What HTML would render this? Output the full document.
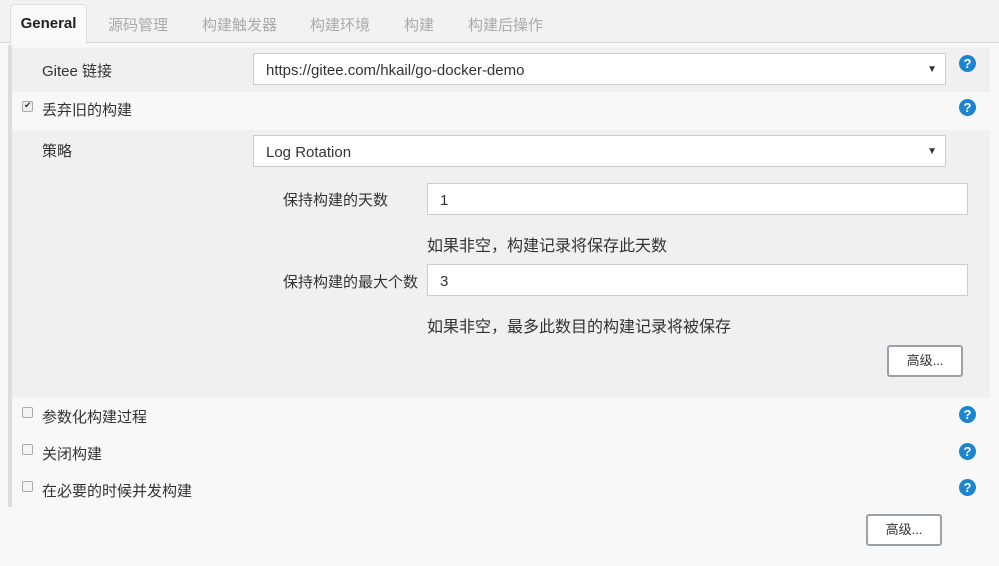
<!DOCTYPE html>
<html><head><meta charset="utf-8"><style>
*{box-sizing:border-box;margin:0;padding:0}
body{width:999px;height:566px;background:#f8f8f8;font-family:"Liberation Sans","Noto Sans CJK SC",sans-serif;font-size:15px;color:#333;position:relative;overflow:hidden}
.a{position:absolute}
.tabs{left:0;top:0;width:999px;height:43px;background:#f2f2f2;border-bottom:1px solid #d8d8d8}
.tab{top:14px;font-size:15px;color:#aaa}
.gen{left:10px;top:4px;width:77px;height:40px;background:#f9f9f9;border:1px solid #ddd;border-bottom:none;border-radius:4px 4px 0 0;font-weight:bold;color:#222;text-align:center;line-height:38px}
.bar{left:8px;top:45px;width:4px;height:462px;background:#ddd}
.inp{background:#fff;border:1px solid #ccc;height:32px;line-height:34px;padding-left:12px;overflow:hidden}
.q{width:17px;height:17px;border-radius:50%;background:#1b85d0;color:#fff;font-weight:bold;font-size:13px;text-align:center;line-height:17px}
.cb{width:11px;height:11px;border:1px solid #aaa;border-radius:2px;background:#f4f4f4}
.btn{background:#fff;border:2px solid #9aa1a8;border-radius:3px;height:32px;width:76px;text-align:center;line-height:28px;font-size:13px}
.arr{right:8px;top:0;font-size:10px;color:#333;line-height:32px}
.d{font-size:16px}
</style></head><body>
<div class="a tabs"></div>
<div class="a gen">General</div>
<div class="a tab" style="left:108px">源码管理</div>
<div class="a tab" style="left:202px">构建触发器</div>
<div class="a tab" style="left:310px">构建环境</div>
<div class="a tab" style="left:404px">构建</div>
<div class="a tab" style="left:468px">构建后操作</div>
<div class="a bar"></div>
<div class="a" style="left:12px;top:48px;width:978px;height:44px;background:#f0f0f0"></div>
<div class="a" style="left:12px;top:130px;width:978px;height:268px;background:#f0f0f0"></div>
<div class="a" style="left:42px;top:60px">Gitee 链接</div>
<div class="a inp" style="left:253px;top:53px;width:693px">https://gitee.com/hkail/go-docker-demo<span class="a arr">▼</span></div>
<div class="a q" style="left:959px;top:55px">?</div>
<div class="a cb" style="left:22px;top:101px;background:#eee"><span style="font-size:9px;position:absolute;left:1px;top:-2px">✔</span></div>
<div class="a" style="left:42px;top:99px">丢弃旧的构建</div>
<div class="a q" style="left:959px;top:99px">?</div>
<div class="a" style="left:42px;top:140px">策略</div>
<div class="a inp" style="left:253px;top:135px;width:693px">Log Rotation<span class="a arr">▼</span></div>
<div class="a" style="left:283px;top:189px">保持构建的天数</div>
<div class="a inp" style="left:427px;top:183px;width:541px">1</div>
<div class="a d" style="left:427px;top:232px">如果非空，构建记录将保存此天数</div>
<div class="a" style="left:283px;top:271px">保持构建的最大个数</div>
<div class="a inp" style="left:427px;top:264px;width:541px">3</div>
<div class="a d" style="left:427px;top:313px">如果非空，最多此数目的构建记录将被保存</div>
<div class="a btn" style="left:887px;top:345px">高级...</div>
<div class="a cb" style="left:22px;top:407px"></div>
<div class="a" style="left:42px;top:406px">参数化构建过程</div>
<div class="a q" style="left:959px;top:406px">?</div>
<div class="a cb" style="left:22px;top:444px"></div>
<div class="a" style="left:42px;top:443px">关闭构建</div>
<div class="a q" style="left:959px;top:443px">?</div>
<div class="a cb" style="left:22px;top:481px"></div>
<div class="a" style="left:42px;top:480px">在必要的时候并发构建</div>
<div class="a q" style="left:959px;top:479px">?</div>
<div class="a btn" style="left:866px;top:514px">高级...</div>
</body></html>
